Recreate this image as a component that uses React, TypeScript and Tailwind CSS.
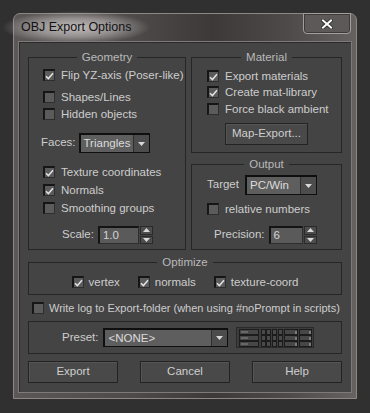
import React from "react";

const FONT = { fontFamily: '"Liberation Sans", Arial, sans-serif' };

function Check({ checked }: { checked?: boolean }) {
  return (
    <span className="flex h-[12px] w-[12px] shrink-0 items-center justify-center border-l-2 border-t-2 border-r border-b border-l-[#161616] border-t-[#161616] border-r-[#2e2e2e] border-b-[#2e2e2e] bg-[#5b5b5b]">
      {checked && (
        <svg width="9" height="8" viewBox="0 0 9 8">
          <path d="M1 4.2 L3.4 6.6 L8 1.2" stroke="#e2e2e2" strokeWidth="1.5" fill="none" />
        </svg>
      )}
    </span>
  );
}

function CheckRow({ checked, label, gap = "gap-[6px]" }: { checked?: boolean; label: string; gap?: string }) {
  return (
    <div className={`flex h-[16px] items-center ${gap}`}>
      <Check checked={checked} />
      <span className="whitespace-nowrap leading-[16px]">{label}</span>
    </div>
  );
}

function Arrow({ up }: { up?: boolean }) {
  return (
    <svg width="7" height="4" viewBox="0 0 7 4">
      {up ? <path d="M0 4 L3.5 0 L7 4 Z" fill="#d8d8d8" /> : <path d="M0 0 L7 0 L3.5 4 Z" fill="#d8d8d8" />}
    </svg>
  );
}

function Dropdown({ value, cls }: { value: string; cls: string }) {
  return (
    <div className={`flex border-l-2 border-t-2 border-r border-b border-[#0f0f0f] bg-[#5e5e5e] ${cls}`}>
      <span className="flex-1 whitespace-nowrap pl-[3px] text-[11.5px] leading-[16px] text-[#dcdcdc]">{value}</span>
      <span className="flex w-[16px] items-center justify-center border-l border-[#2f2f2f] bg-[#4c4c4c]">
        <Arrow />
      </span>
    </div>
  );
}

function Spinner({ value, cls }: { value: string; cls: string }) {
  return (
    <div className="flex h-[18px] gap-[1px]">
      <div className={`border-l-2 border-t-2 border-r border-b border-l-[#141414] border-t-[#141414] border-r-[#2e2e2e] border-b-[#2e2e2e] bg-[#5a5a5a] pl-[3px] text-[11.5px] leading-[14px] text-[#d4d4d4] ${cls}`}>
        {value}
      </div>
      <div className="flex w-[13px] flex-col gap-[1px]">
        <span className="flex flex-1 items-center justify-center border border-[#2a2a2a] bg-[#4d4d4d]">
          <Arrow up />
        </span>
        <span className="flex flex-1 items-center justify-center border border-[#2a2a2a] bg-[#4d4d4d]">
          <Arrow />
        </span>
      </div>
    </div>
  );
}

function Button({ label, cls }: { label: string; cls: string }) {
  return (
    <div className={`flex items-center justify-center border border-[#232323] bg-[#494949] text-[11.5px] text-[#cfcfcf] shadow-[inset_1px_1px_0_#555555] ${cls}`}>
      {label}
    </div>
  );
}

function PresetIcon() {
  const rows = [2, 8, 14];
  return (
    <svg width="78" height="21" viewBox="0 0 78 21">
      <rect x="0.5" y="0.5" width="77" height="20" fill="#3c3c3c" stroke="#2a2a2a" />
      {rows.map((y) => (
        <g key={y}>
          <rect x="3.5" y={y + 0.5} width="19" height="5" fill="#474747" stroke="#1c1c1c" />
          <line x1="5" y1={y + 3} x2="12" y2={y + 3} stroke="#8a8a8a" />
          {[25, 30, 36, 42].map((x) => (
            <rect key={x} x={x + 0.5} y={y + 0.5} width="4" height="5" fill="#4a4a4a" stroke="#1c1c1c" />
          ))}
          <rect x="48.5" y={y + 0.5} width="13" height="5" fill="#474747" stroke="#1c1c1c" />
          <line x1="60" y1={y + 2} x2="60" y2={y + 5} stroke="#b0b0b0" />
          <rect x="63.5" y={y + 0.5} width="12" height="5" fill="#474747" stroke="#1c1c1c" />
          <line x1="74" y1={y + 2} x2="74" y2={y + 5} stroke="#b0b0b0" />
        </g>
      ))}
    </svg>
  );
}

function Legend({ children }: { children: React.ReactNode }) {
  return <legend className="mx-auto px-[5px] text-[11.5px] leading-[14px] text-[#b9b9b9]">{children}</legend>;
}

export default function App() {
  return (
    <div className="h-[413px] w-[370px] bg-[#303030] pl-[13px] pt-[13px] text-[11.5px] text-[#cdcdcd]" style={FONT}>
      <div className="flex h-[386px] w-[344px] flex-col rounded-t-[7px] border border-[#8c8787] bg-[linear-gradient(90deg,#5c5757_0%,#4f4a4a_35%,#3e3939_58%,#4f4a4a_80%,#676262_100%)]">
        <div className="flex h-[27px] shrink-0 justify-between">
          <div className="-ml-[12px] flex items-center">
            <span className="bg-[radial-gradient(ellipse_closest-side,rgba(220,215,215,0.8)_0%,rgba(200,195,195,0.55)_55%,rgba(120,115,115,0)_100%)] px-[19px] py-[7px] text-[12.5px] text-[#111111]">
              OBJ Export Options
            </span>
          </div>
          <div className="-mt-[1px] mr-[5px] flex h-[21px] w-[48px] items-center justify-center rounded-b-[4px] border border-[#a39e9e] bg-[#5e5959] shadow-[inset_0_0_0_1px_#3f3a3a]">
            <svg width="12" height="10" viewBox="0 0 12 10">
              <path d="M2 1.5 L10 8.5 M10 1.5 L2 8.5" stroke="#2a2a2a" strokeWidth="3.6" strokeLinecap="square" />
              <path d="M2 1.5 L10 8.5 M10 1.5 L2 8.5" stroke="#ffffff" strokeWidth="2" strokeLinecap="square" />
            </svg>
          </div>
        </div>
        <div className="mx-[4px] mb-[5px] flex flex-1 flex-col border border-[#7f7a7a] bg-[#444444] px-[9px] pb-[8px] pt-[8px] shadow-[inset_1px_1px_0_#2b2b2b]">
          <div className="grid grid-cols-[158px_1fr] gap-[5px]">
            <fieldset className="border border-[#262626] pb-[5px]">
              <Legend>Geometry</Legend>
              <div className="flex flex-col pl-[14px]">
                <div className="mt-[3px]"><CheckRow checked label="Flip YZ-axis (Poser-like)" /></div>
                <div className="mt-[6px]"><CheckRow label="Shapes/Lines" /></div>
                <div className="mt-[1px]"><CheckRow label="Hidden objects" /></div>
                <div className="-ml-[2px] mt-[11px] flex h-[20px] items-center gap-[3px]">
                  <span>Faces:</span>
                  <Dropdown value="Triangles" cls="h-[20px] w-[71px]" />
                </div>
                <div className="mt-[11px]"><CheckRow checked label="Texture coordinates" /></div>
                <div className="mt-[2px]"><CheckRow checked label="Normals" /></div>
                <div className="mt-[2px]"><CheckRow label="Smoothing groups" /></div>
                <div className="ml-[19px] mt-[10px] flex h-[18px] items-center gap-[4px]">
                  <span>Scale:</span>
                  <Spinner value="1.0" cls="w-[41px]" />
                </div>
              </div>
            </fieldset>
            <div className="flex flex-col gap-[4px]">
              <fieldset className="border border-[#262626] pb-[7px]">
                <Legend>Material</Legend>
                <div className="flex flex-col pl-[15px]">
                  <div className="mt-[4px]"><CheckRow checked label="Export materials" /></div>
                  <div><CheckRow checked label="Create mat-library" /></div>
                  <div className="mt-[1px]"><CheckRow label="Force black ambient" /></div>
                </div>
                <div className="mt-[6px] flex justify-center">
                  <Button label="Map-Export..." cls="h-[22px] w-[83px]" />
                </div>
              </fieldset>
              <fieldset className="flex-1 border border-[#262626] pb-[5px]">
                <Legend>Output</Legend>
                <div className="flex flex-col pl-[15px]">
                  <div className="mt-[4px] flex h-[20px] items-center gap-[6px]">
                    <span>Target</span>
                    <Dropdown value="PC/Win" cls="h-[20px] w-[72px]" />
                  </div>
                  <div className="mt-[6px]"><CheckRow label="relative numbers" /></div>
                  <div className="ml-[7px] mt-[9px] flex h-[18px] items-center gap-[4px]">
                    <span>Precision:</span>
                    <Spinner value="6" cls="w-[34px]" />
                  </div>
                </div>
              </fieldset>
            </div>
          </div>
          <fieldset className="mt-[5px] border border-[#262626] pb-[4px]">
            <Legend>Optimize</Legend>
            <div className="mt-[5px] flex justify-center gap-[18px]">
              <CheckRow checked label="vertex" gap="gap-[5px]" />
              <CheckRow checked label="normals" gap="gap-[5px]" />
              <CheckRow checked label="texture-coord" gap="gap-[5px]" />
            </div>
          </fieldset>
          <div className="ml-[4px] mt-[5px] text-[11px]">
            <CheckRow label="Write log to Export-folder (when using #noPrompt in scripts)" gap="gap-[5px]" />
          </div>
          <div className="mt-[5px] flex h-[33px] items-center border border-[#262626] pl-[33px]">
            <span>Preset:</span>
            <div className="ml-[5px]">
              <Dropdown value="<NONE>" cls="h-[19px] w-[125px]" />
            </div>
            <div className="ml-[8px] flex">
              <PresetIcon />
            </div>
          </div>
          <div className="mt-[7px] flex justify-between">
            <Button label="Export" cls="h-[22px] w-[90px]" />
            <Button label="Cancel" cls="h-[22px] w-[90px]" />
            <Button label="Help" cls="h-[22px] w-[90px]" />
          </div>
        </div>
      </div>
    </div>
  );
}
